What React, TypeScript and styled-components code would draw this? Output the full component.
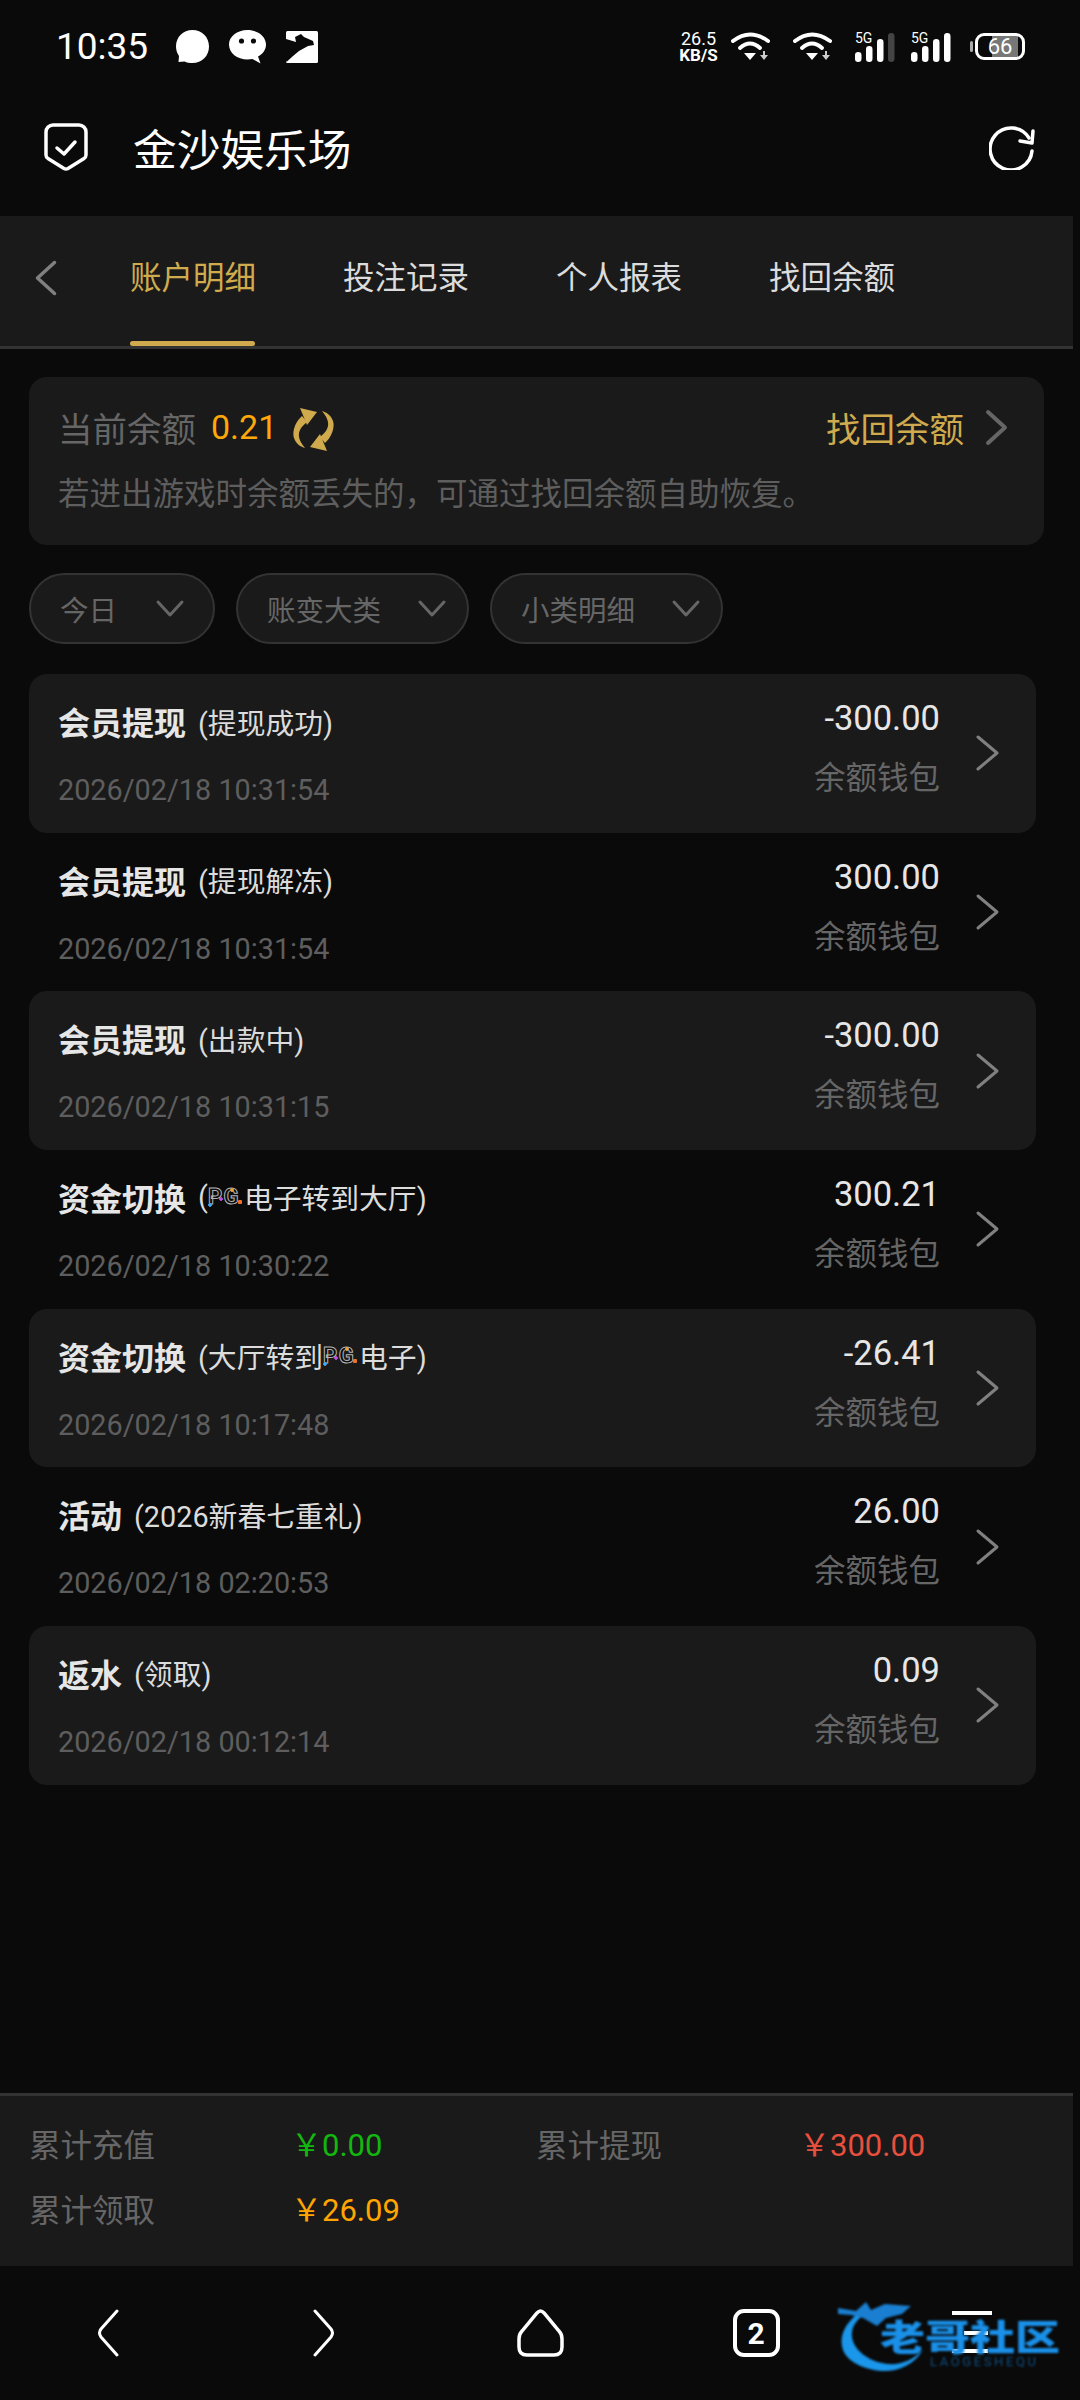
import React from "react";
import styled, { createGlobalStyle } from "styled-components";

const GlobalStyle = createGlobalStyle`
  html, body {
    margin: 0;
    padding: 0;
    background: #0a0a0a;
  }
  * {
    box-sizing: border-box;
  }
`;

const Page = styled.div`
  display: flex;
  flex-direction: column;
  width: 1080px;
  height: 2400px;
  overflow: hidden;
  background: #0a0a0a;
  color: #e6e6e6;
  font-family: Roboto, "Noto Sans CJK SC", sans-serif;
`;

const StatusBar = styled.div`
  display: flex;
  align-items: center;
  height: 72px;
  padding: 21px 55px 0 56px;
  color: #fff;
`;

const Clock = styled.span`
  font-size: 37px;
  width: 120px;
`;

const StatusLeft = styled.div`
  display: flex;
  align-items: center;
  gap: 20px;
  flex: 1;
`;

const StatusRight = styled.div`
  display: flex;
  align-items: center;
`;

const StatusSlot = styled.div<{ $gap: number }>`
  display: flex;
  margin-left: ${(p) => p.$gap}px;
`;

const Speed = styled.div`
  display: flex;
  flex-direction: column;
  align-items: center;
  width: 43px;
  font-size: 18px;
  line-height: 16px;
`;

const SpeedUnit = styled.span`
  font-size: 17px;
  font-weight: 700;
`;

const Signal = styled.div`
  position: relative;
  width: 40px;
  height: 30px;
`;

const SignalLabel = styled.span`
  position: absolute;
  left: 0;
  top: 0;
  font-size: 14px;
  line-height: 12px;
  color: #fff;
`;

const Battery = styled.div`
  position: relative;
  display: flex;
  align-items: center;
  justify-content: center;
  width: 50px;
  height: 27px;
  border: 3px solid #fff;
  border-radius: 9px;
  font-size: 22px;
  color: #fff;
  background: linear-gradient(to right, transparent 32%, #777 32%, #777 92%, transparent 92%);
  &::before {
    content: "";
    position: absolute;
    left: -8px;
    top: 5px;
    width: 3px;
    height: 11px;
    border-radius: 2px;
    background: #aaa;
  }
`;

const Header = styled.div`
  display: flex;
  align-items: center;
  height: 144px;
  padding: 6px 45px 0 44px;
`;

const Title = styled.h1`
  flex: 1;
  margin: 0 0 0 45px;
  font-size: 43.7px;
  font-weight: 400;
  color: #fff;
`;

const Tabs = styled.div`
  display: flex;
  align-items: stretch;
  width: 1073px;
  height: 133px;
  padding-left: 34px;
  background: #1a1a1a;
  border-bottom: 3px solid #333;
`;

const TabBack = styled.div`
  display: flex;
  align-items: center;
  width: 96px;
  padding-bottom: 6px;
`;

const Tab = styled.div<{ $active?: boolean }>`
  position: relative;
  display: flex;
  align-items: center;
  width: 125px;
  margin-right: 88px;
  padding-bottom: 12px;
  font-size: 31.5px;
  white-space: nowrap;
  color: ${(p) => (p.$active ? "#d0ab4e" : "#dcdcdc")};
  ${(p) =>
    p.$active &&
    `&::after {
      content: "";
      position: absolute;
      left: 0;
      right: 0;
      bottom: 0;
      height: 5px;
      border-radius: 3px;
      background: #d0ab4e;
    }`}
`;

const BalanceCard = styled.div`
  width: 1015px;
  height: 168px;
  margin: 28px 0 0 29px;
  padding: 26px 35px 0 29px;
  border-radius: 18px;
  background: #1a1a1a;
`;

const BalanceTop = styled.div`
  display: flex;
  align-items: center;
  height: 48px;
`;

const BalanceLabel = styled.span`
  font-size: 34.5px;
  color: #666;
`;

const BalanceValue = styled.span`
  margin: 0 16px 0 15px;
  font-size: 34px;
  color: #fea80a;
`;

const SwirlSlot = styled.span`
  display: flex;
  margin-top: 5px;
`;

const RecoverLink = styled.span`
  margin: 0 20px 0 auto;
  font-size: 34.5px;
  color: #d0ab4e;
`;

const Hint = styled.div`
  margin: 24px 0 0 0;
  font-size: 31.5px;
  line-height: 40px;
  color: #5e5e5e;
  white-space: nowrap;
`;

const Filters = styled.div`
  display: flex;
  gap: 21px;
  margin: 28px 0 0 29px;
`;

const Pill = styled.div<{ $width: number; $end: number }>`
  display: flex;
  align-items: center;
  justify-content: space-between;
  width: ${(p) => p.$width}px;
  height: 71px;
  padding: 0 ${(p) => p.$end}px 0 29px;
  border: 2px solid #333;
  border-radius: 36px;
  background: #1a1a1a;
  font-size: 28.5px;
  color: #666;
`;

const List = styled.div`
  display: grid;
  grid-auto-rows: 158.67px;
  width: 1007px;
  margin: 30px 0 0 29px;
`;

const Row = styled.div<{ $filled: boolean }>`
  display: flex;
  padding: 0 36px 0 29px;
  border-radius: 18px;
  background: ${(p) => (p.$filled ? "#1a1a1a" : "transparent")};
`;

const RowMain = styled.div`
  flex: 1;
  padding-top: 23px;
`;

const RowTitle = styled.div`
  display: flex;
  align-items: center;
  height: 48px;
  white-space: nowrap;
`;

const RowKind = styled.span`
  margin-right: 12px;
  font-size: 32px;
  font-weight: 700;
  color: #e6e6e6;
`;

const RowSub = styled.span`
  display: inline-flex;
  align-items: center;
  font-size: 28.8px;
  color: #dcdcdc;
`;

const PgMark = styled.span`
  position: relative;
  display: inline-block;
  width: 34px;
  margin-right: 2px;
  font-size: 22px;
  font-weight: 700;
  line-height: 20px;
  letter-spacing: 1.5px;
  color: #0a0a0a;
  -webkit-text-stroke: 1px #b5b5b5;
  &::after {
    content: "";
    position: absolute;
    inset: 0;
    background:
      radial-gradient(circle at 2px 18px, #3fa9f5 1.5px, transparent 2px),
      radial-gradient(circle at 13px 12px, #c04fe0 1.5px, transparent 2px),
      radial-gradient(circle at 24px 3px, #e8a33a 1.5px, transparent 2px),
      radial-gradient(circle at 32px 15px, #f0702a 2px, transparent 2.5px);
  }
`;

const RowDate = styled.div`
  margin-top: 25px;
  font-size: 28.8px;
  line-height: 40px;
  color: #5e5e5e;
`;

const RowSide = styled.div`
  display: flex;
  flex-direction: column;
  align-items: flex-end;
  padding-top: 24px;
`;

const Amount = styled.div`
  font-size: 34.5px;
  line-height: 40px;
  color: #e6e6e6;
`;

const Wallet = styled.div`
  margin-top: 21px;
  font-size: 31.5px;
  line-height: 40px;
  color: #666;
`;

const RowArrow = styled.div`
  display: flex;
  align-items: center;
  margin-left: 35px;
`;

const Totals = styled.div`
  display: grid;
  grid-template-columns: 262px 245px 263px 1fr;
  grid-auto-rows: 65px;
  align-items: center;
  width: 1073px;
  height: 173px;
  margin-top: auto;
  padding: 14px 0 0 29px;
  background: #1a1a1a;
  border-top: 3px solid #333;
`;

const TotalLabel = styled.span`
  font-size: 31.5px;
  color: #666;
`;

const TotalValue = styled.span<{ $color: string }>`
  font-size: 31px;
  color: ${(p) => p.$color};
`;

const NavBar = styled.div`
  position: relative;
  display: grid;
  grid-template-columns: repeat(5, 1fr);
  align-items: center;
  justify-items: center;
  height: 134px;
`;

const TabCount = styled.div`
  display: flex;
  align-items: center;
  justify-content: center;
  width: 47px;
  height: 48px;
  border: 4px solid #fff;
  border-radius: 11px;
  font-size: 30px;
  font-weight: 700;
  color: #fff;
`;

const Watermark = styled.div`
  position: absolute;
  left: 838px;
  top: 32px;
  width: 224px;
  height: 76px;
  filter: blur(0.8px);
`;

const WatermarkName = styled.span`
  position: absolute;
  left: 42px;
  top: 24px;
  font-size: 36px;
  line-height: 34px;
  font-weight: 900;
  white-space: nowrap;
  color: #1a90e8;
  transform: scaleX(1.25);
  transform-origin: left center;
`;

const WatermarkSub = styled.span`
  position: absolute;
  left: 92px;
  top: 58px;
  font-size: 13px;
  line-height: 12px;
  letter-spacing: 2.6px;
  white-space: nowrap;
  color: #0f4f80;
`;

const Chevron = ({ dir, w, h, color, sw }: { dir: "left" | "right" | "down"; w: number; h: number; color: string; sw: number }) => {
  const pts =
    dir === "left"
      ? `${w - sw},${sw} ${sw},${h / 2} ${w - sw},${h - sw}`
      : dir === "right"
      ? `${sw},${sw} ${w - sw},${h / 2} ${sw},${h - sw}`
      : `${sw},${sw} ${w / 2},${h - sw} ${w - sw},${sw}`;
  return (
    <svg width={w} height={h} viewBox={`0 0 ${w} ${h}`}>
      <polyline points={pts} fill="none" stroke={color} strokeWidth={sw} strokeLinecap="round" strokeLinejoin="round" />
    </svg>
  );
};

const BubbleIcon = () => (
  <svg width="33" height="33" viewBox="0 0 33 33">
    <path d="M16.5 0C26 0 33 7 33 16.5S26 33 16.5 33c-3 0-6-.5-8-1.500L2.500 32l.5-6C1 23 0 20 0 16.500 0 7 7 0 16.500 0z" fill="#fff" />
  </svg>
);

const ChatIcon = () => (
  <svg width="37" height="34" viewBox="0 0 37 34">
    <path d="M18.500 0C29 0 37 6.500 37 14.500c0 5-3 9.500-8 12l2.500 7-8-4.500c-1.500.3-3.300.5-5 .5C8 29.500 0 23 0 14.500 0 6.500 8 0 18.500 0z" fill="#fff" />
    <circle cx="12.500" cy="11" r="2.600" fill="#0a0a0a" />
    <circle cx="24.500" cy="11" r="2.600" fill="#0a0a0a" />
  </svg>
);

const AppBadgeIcon = () => (
  <svg width="32" height="32" viewBox="0 0 32 32">
    <rect width="32" height="32" rx="1.500" fill="#fff" />
    <path d="M0 8L10 11 9 6 15 3 18 6 27 10 28 14 22 15 13 20 7 25 1 30.500H0z" fill="#0a0a0a" />
  </svg>
);

const WifiIcon = () => (
  <svg width="39" height="29" viewBox="0 0 39 29">
    <path d="M2 9Q19-4 37 9" fill="none" stroke="#fff" strokeWidth="4" strokeLinecap="round" />
    <path d="M9 16Q19 7 29 16" fill="none" stroke="#fff" strokeWidth="4" strokeLinecap="round" />
    <path d="M13 21h12l-6 7z" fill="#fff" />
    <path d="M32 19v4h-3l4 5 4-5h-3v-4z" fill="#ccc" />
  </svg>
);

const SignalIcon = ({ dim }: { dim?: boolean }) => (
  <Signal>
    <svg width="40" height="30" viewBox="0 0 40 30">
      <rect x="0" y="20" width="6.500" height="10" rx="3.200" fill="#fff" />
      <rect x="11" y="14" width="6.500" height="16" rx="3.200" fill="#fff" />
      <rect x="22" y="7" width="6.500" height="23" rx="3.200" fill="#fff" />
      <rect x="33" y="1" width="6.500" height="29" rx="3.200" fill={dim ? "#444" : "#fff"} />
    </svg>
    <SignalLabel>5G</SignalLabel>
  </Signal>
);

const ShieldIcon = () => (
  <svg width="44" height="48" viewBox="0 0 44 48">
    <path
      d="M9 2h26a7 7 0 0 1 7 7v23a4 4 0 0 1-2 3.500L24 45.500a4 4 0 0 1-4 0L4 35.500A4 4 0 0 1 2 32V9a7 7 0 0 1 7-7z"
      fill="none"
      stroke="#fff"
      strokeWidth="3.500"
    />
    <polyline points="13,25 20,31 31,19" fill="none" stroke="#fff" strokeWidth="3.500" strokeLinecap="round" strokeLinejoin="round" />
  </svg>
);

const RefreshIcon = () => (
  <svg width="46" height="46" viewBox="0 0 46 46">
    <path d="M40 14A21 21 0 1 0 43 27" fill="none" stroke="#fff" strokeWidth="3.500" strokeLinecap="round" />
    <polyline points="44,7 43,19 31,17" fill="none" stroke="#fff" strokeWidth="3.500" strokeLinecap="round" strokeLinejoin="round" />
  </svg>
);

const SwirlIcon = () => {
  const half = (
    <>
      <path d="M9 8C2 14-1 24 1 30 3 36 8 39 12 40 7 34 4 28 7 22 8 19 11 17 14 14z" fill="#d0ab4e" />
      <path d="M7 0L24 4 14 17z" fill="#d0ab4e" />
    </>
  );
  return (
    <svg width="41" height="43" viewBox="0 0 41 43">
      {half}
      <g transform="rotate(180 20.500 21.500)">{half}</g>
    </svg>
  );
};

const HomeIcon = () => (
  <svg width="47" height="48" viewBox="0 0 47 48">
    <path
      d="M20 4Q23.500 0 27 4L42 22Q45 25 45 30V38Q45 46 37 46H10Q2 46 2 38V30Q2 25 5 22Z"
      fill="none"
      stroke="#fff"
      strokeWidth="3.500"
    />
  </svg>
);

const NavBackIcon = ({ flip }: { flip?: boolean }) => (
  <svg width="22" height="48" viewBox="0 0 22 48" style={flip ? { transform: "scaleX(-1)" } : undefined}>
    <path d="M20 2L4 20Q1 24 4 28L20 46" fill="none" stroke="#fff" strokeWidth="3" strokeLinecap="round" />
  </svg>
);

const MenuIcon = () => (
  <svg width="44" height="44" viewBox="0 0 44 44">
    <path d="M2 2h40M14 22h24M2 40h36" fill="none" stroke="#fff" strokeWidth="4" />
  </svg>
);

const DragonArc = () => (
  <svg width="90" height="76" viewBox="0 0 90 76" style={{ position: "absolute", left: 0, top: 0 }}>
    <path d="M22 14C8 24 0 38 5 52c6 16 34 24 52 20 12-3 22-10 28-20-10 10-22 15-35 14C30 64 12 50 14 34c1-8 7-14 14-19z" fill="#1a96ea" />
    <path d="M0 10l18 3 10-9 5 8 14-6 26 2-9 8-16 4-9 8-14-8-12-3-13-1z" fill="#1a7fd0" />
  </svg>
);

const PG = () => <PgMark>PG</PgMark>;

type Record = {
  kind: string;
  sub: React.ReactNode;
  date: string;
  amount: string;
};

const records: Record[] = [
  { kind: "会员提现", sub: "(提现成功)", date: "2026/02/18 10:31:54", amount: "-300.00" },
  { kind: "会员提现", sub: "(提现解冻)", date: "2026/02/18 10:31:54", amount: "300.00" },
  { kind: "会员提现", sub: "(出款中)", date: "2026/02/18 10:31:15", amount: "-300.00" },
  { kind: "资金切换", sub: <>(<PG />电子转到大厅)</>, date: "2026/02/18 10:30:22", amount: "300.21" },
  { kind: "资金切换", sub: <>(大厅转到<PG />电子)</>, date: "2026/02/18 10:17:48", amount: "-26.41" },
  { kind: "活动", sub: "(2026新春七重礼)", date: "2026/02/18 02:20:53", amount: "26.00" },
  { kind: "返水", sub: "(领取)", date: "2026/02/18 00:12:14", amount: "0.09" },
];

const filters = [
  { label: "今日", width: 186, end: 28 },
  { label: "账变大类", width: 233, end: 20 },
  { label: "小类明细", width: 233, end: 20 },
];

export default function App() {
  return (
    <Page>
      <GlobalStyle />
      <StatusBar>
        <Clock>10:35</Clock>
        <StatusLeft>
          <BubbleIcon />
          <ChatIcon />
          <AppBadgeIcon />
        </StatusLeft>
        <StatusRight>
          <Speed>
            26.5
            <SpeedUnit>KB/S</SpeedUnit>
          </Speed>
          <StatusSlot $gap={11}>
            <WifiIcon />
          </StatusSlot>
          <StatusSlot $gap={23}>
            <WifiIcon />
          </StatusSlot>
          <StatusSlot $gap={23}>
            <SignalIcon dim />
          </StatusSlot>
          <StatusSlot $gap={16}>
            <SignalIcon />
          </StatusSlot>
          <StatusSlot $gap={24}>
            <Battery>66</Battery>
          </StatusSlot>
        </StatusRight>
      </StatusBar>

      <Header>
        <ShieldIcon />
        <Title>金沙娱乐场</Title>
        <RefreshIcon />
      </Header>

      <Tabs>
        <TabBack>
          <Chevron dir="left" w={24} h={38} color="#808080" sw={3.5} />
        </TabBack>
        <Tab $active>账户明细</Tab>
        <Tab>投注记录</Tab>
        <Tab>个人报表</Tab>
        <Tab>找回余额</Tab>
      </Tabs>

      <BalanceCard>
        <BalanceTop>
          <BalanceLabel>当前余额</BalanceLabel>
          <BalanceValue>0.21</BalanceValue>
          <SwirlSlot>
            <SwirlIcon />
          </SwirlSlot>
          <RecoverLink>找回余额</RecoverLink>
          <Chevron dir="right" w={25} h={39} color="#666" sw={4} />
        </BalanceTop>
        <Hint>若进出游戏时余额丢失的，可通过找回余额自助恢复。</Hint>
      </BalanceCard>

      <Filters>
        {filters.map((f) => (
          <Pill key={f.label} $width={f.width} $end={f.end}>
            {f.label}
            <Chevron dir="down" w={30} h={19} color="#666" sw={3} />
          </Pill>
        ))}
      </Filters>

      <List>
        {records.map((r, i) => (
          <Row key={r.date + i} $filled={i % 2 === 0}>
            <RowMain>
              <RowTitle>
                <RowKind>{r.kind}</RowKind>
                <RowSub>{r.sub}</RowSub>
              </RowTitle>
              <RowDate>{r.date}</RowDate>
            </RowMain>
            <RowSide>
              <Amount>{r.amount}</Amount>
              <Wallet>余额钱包</Wallet>
            </RowSide>
            <RowArrow>
              <Chevron dir="right" w={25} h={38} color="#808080" sw={3} />
            </RowArrow>
          </Row>
        ))}
      </List>

      <Totals>
        <TotalLabel>累计充值</TotalLabel>
        <TotalValue $color="#12b80f">￥0.00</TotalValue>
        <TotalLabel>累计提现</TotalLabel>
        <TotalValue $color="#e8503e">￥300.00</TotalValue>
        <TotalLabel>累计领取</TotalLabel>
        <TotalValue $color="#ffa500">￥26.09</TotalValue>
      </Totals>

      <NavBar>
        <NavBackIcon />
        <NavBackIcon flip />
        <HomeIcon />
        <TabCount>2</TabCount>
        <MenuIcon />
        <Watermark>
          <DragonArc />
          <WatermarkName>老哥社区</WatermarkName>
          <WatermarkSub>LAOGESHEQU</WatermarkSub>
        </Watermark>
      </NavBar>
    </Page>
  );
}
